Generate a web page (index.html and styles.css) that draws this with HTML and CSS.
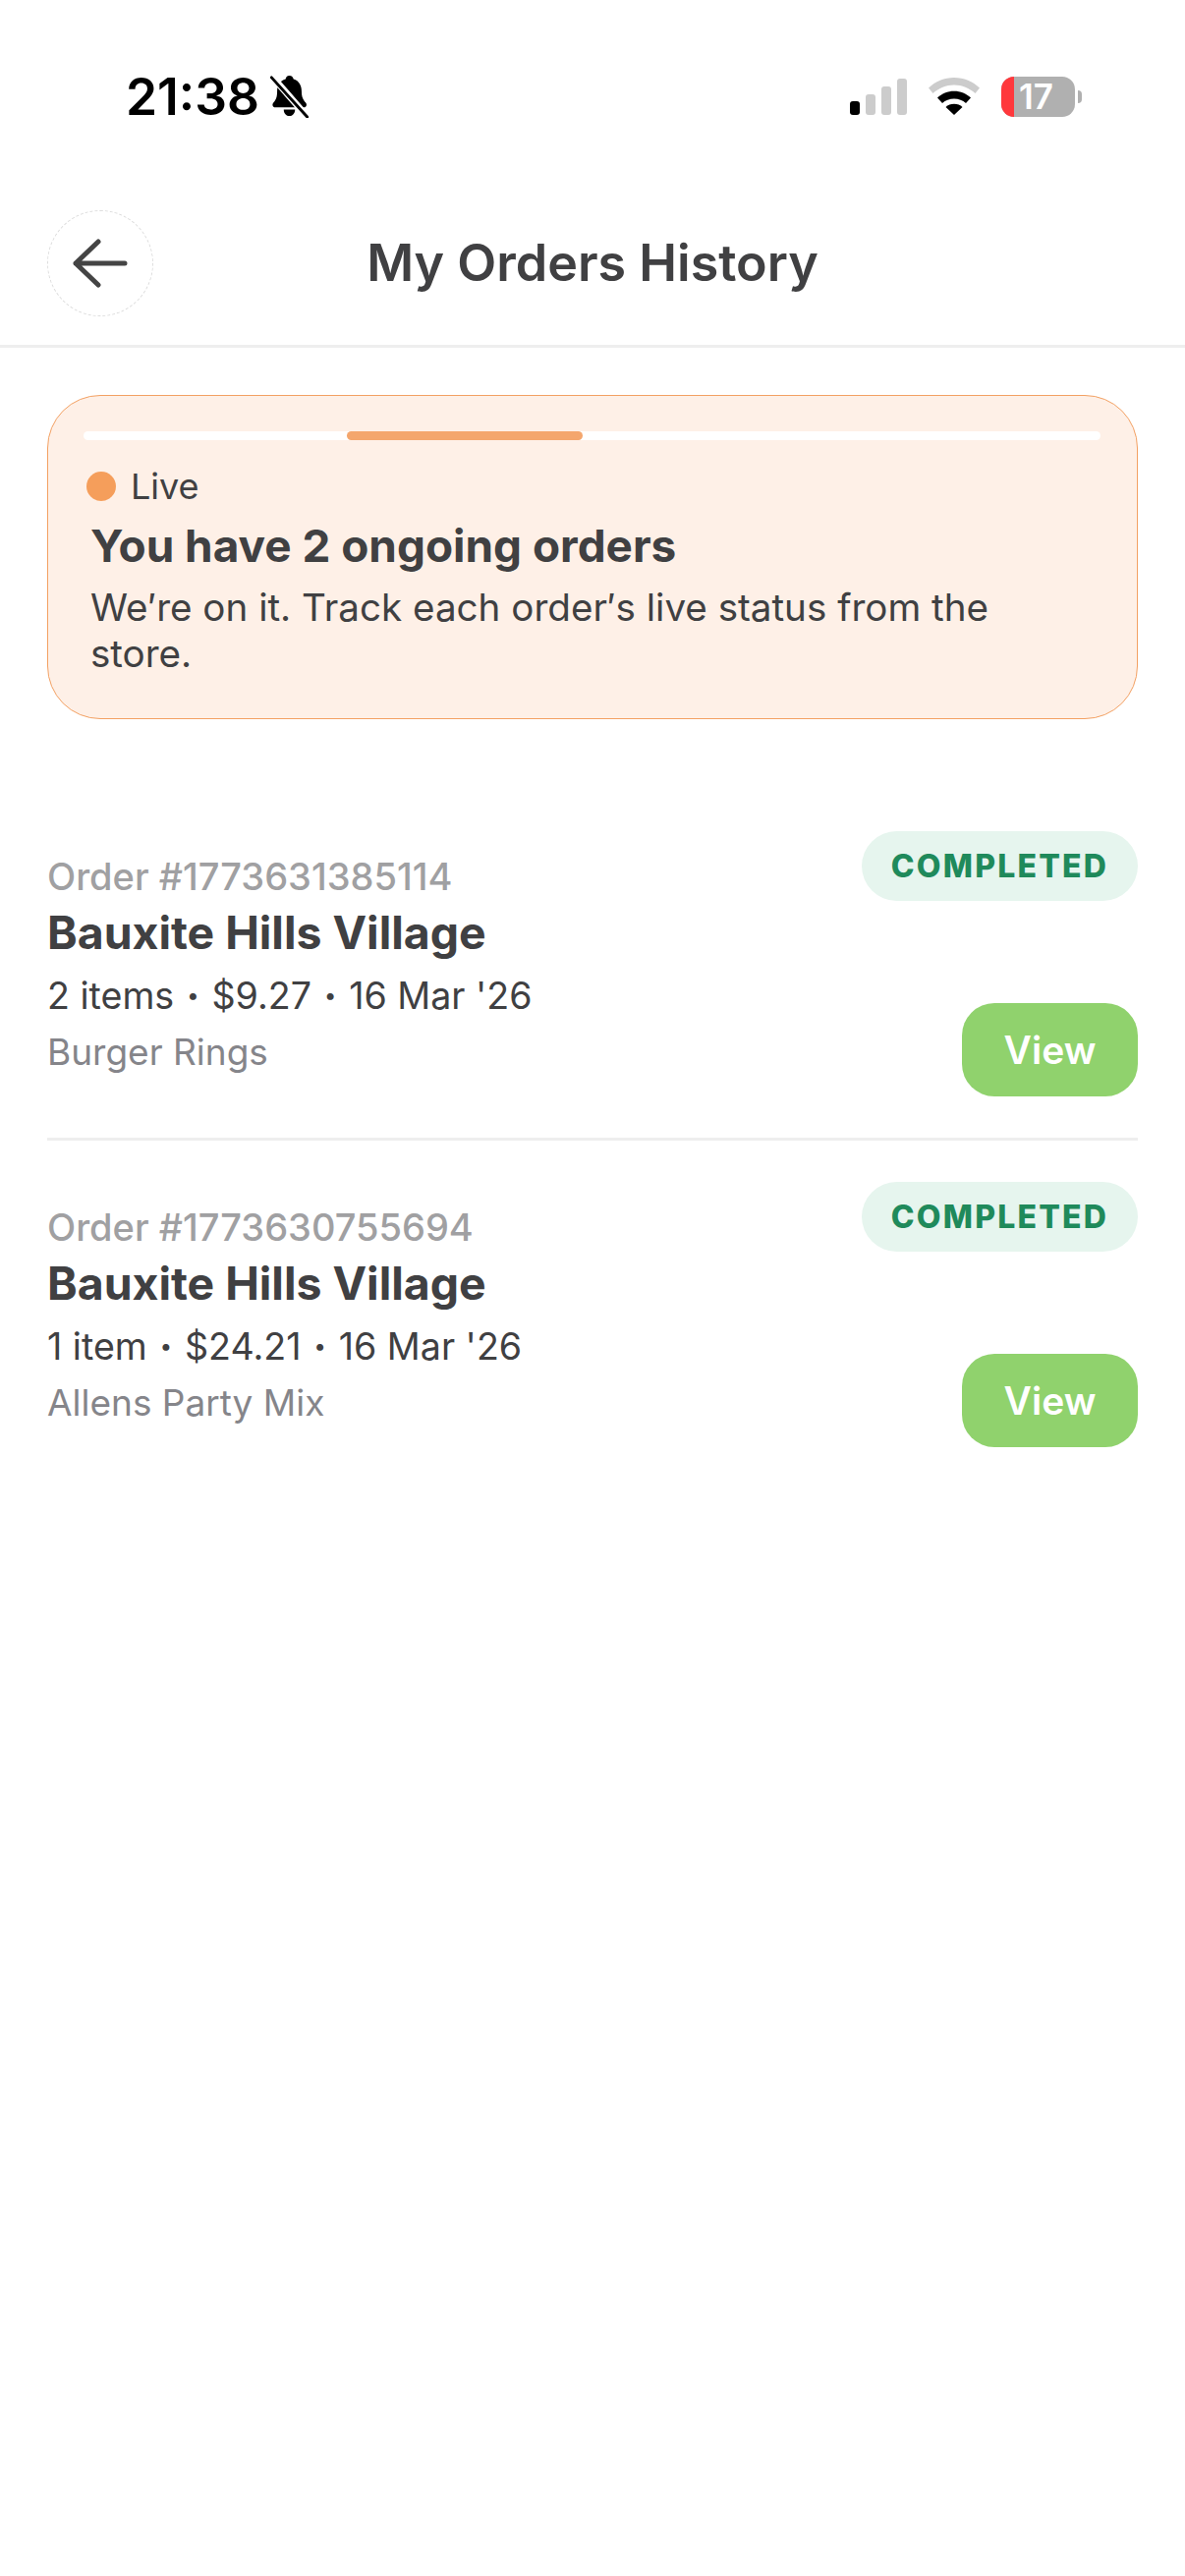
FILE: index.html
```html
<!DOCTYPE html>
<html lang="en">
<head>
<meta charset="utf-8">
<title>My Orders History</title>
<link rel="stylesheet" href="styles.css">
</head>
<body>
<div class="status">
  <div class="status-left">
    <span class="time">21:38</span>
    <svg class="bell" viewBox="0 0 40 46" width="39" height="44">
      <path fill="#000" d="M20 1c2.600 0 4 1.800 4.400 3.800 6 1.800 8.600 7 8.600 13 0 6 1.600 9 4.400 12 1.600 1.800 1 5-2 5H5c-3 0-3.600-3.200-2-5 2.800-3 4-6 4-12 0-6 3-11.200 9-13C16.400 2.800 17.400 1 20 1z"/>
      <path fill="#000" d="M14 37h12c0 4-2.600 7-6 7s-6-3-6-7z"/>
      <path stroke="#fff" stroke-width="7" d="M0 0 40 46"/>
      <path stroke="#000" stroke-width="3" stroke-linecap="round" d="M1 3 39 45"/>
    </svg>
  </div>
  <div class="status-right">
    <div class="signal">
      <i class="bar bar-1"></i><i class="bar bar-2"></i><i class="bar bar-3"></i><i class="bar bar-4"></i>
    </div>
    <svg class="wifi" viewBox="0 0 52 38" width="52" height="38">
      <path fill="#ccc" d="M0 10.500C7 4 16 0 26 0s19 4 26 10.500l-4.500 5.500C41.500 10.700 34 7.500 26 7.500S10.500 10.700 4.500 16z"/>
      <path fill="#000" d="M9 20.500C13.500 16.300 19.500 13.800 26 13.800s12.500 2.500 17 6.700l-5 5.500C34.800 23.200 30.600 21.500 26 21.500S17.200 23.200 14 26z"/>
      <path fill="#000" d="M17.500 30c2.200-2 5.200-3.200 8.500-3.200s6.300 1.200 8.500 3.200L26 38z"/>
    </svg>
    <div class="battery">
      <div class="battery-body"><span class="battery-red"></span><span class="battery-num">17</span></div>
      <span class="battery-nub"></span>
    </div>
  </div>
</div>

<header class="header">
  <div class="back">
    <svg viewBox="0 0 56 50" width="56" height="50">
      <path fill="none" stroke="#444" stroke-width="5" stroke-linecap="round" stroke-linejoin="round" d="M26 3 3 25l23 22M3 25h50"/>
    </svg>
  </div>
  <h1 class="title">My Orders History</h1>
</header>

<section class="live-card">
  <div class="track"><div class="track-fill"></div></div>
  <div class="live-row"><span class="live-dot"></span><span class="live-label">Live</span></div>
  <h2 class="live-title">You have 2 ongoing orders</h2>
  <p class="live-text">We′re on it. Track each order′s live status from the store.</p>
</section>

<main class="orders">
  <article class="order">
    <div class="order-info">
      <div class="order-id">Order #1773631385114</div>
      <div class="order-store">Bauxite Hills Village</div>
      <div class="order-meta">2 items<span class="dot">·</span>$9.27<span class="dot">·</span>16 Mar '26</div>
      <div class="order-items">Burger Rings</div>
    </div>
    <div class="order-side">
      <span class="badge">COMPLETED</span>
      <span class="view">View</span>
    </div>
  </article>
  <article class="order">
    <div class="order-info">
      <div class="order-id">Order #1773630755694</div>
      <div class="order-store">Bauxite Hills Village</div>
      <div class="order-meta">1 item<span class="dot">·</span>$24.21<span class="dot">·</span>16 Mar '26</div>
      <div class="order-items">Allens Party Mix</div>
    </div>
    <div class="order-side">
      <span class="badge">COMPLETED</span>
      <span class="view">View</span>
    </div>
  </article>
</main>
</body>
</html>
```
FILE: styles.css
```css
* { box-sizing: border-box; }
html, body { margin: 0; padding: 0; background: #fff; }
body { width: 1206px; height: 2622px; overflow: hidden; font-family: Inter, "Liberation Sans", sans-serif; color: #404042; }

.status { height: 196px; display: flex; align-items: center; justify-content: space-between; padding: 0 105px 0 128px; }
.status-left { display: flex; align-items: center; gap: 11px; }
.time { font-size: 51.500px; font-weight: 600; color: #000; line-height: 60px; }
.bell { display: block; }
.status-right { display: flex; align-items: center; }
.signal { display: flex; align-items: flex-end; gap: 6px; height: 37px; margin-right: 22px; }
.bar { display: block; width: 10px; background: #ccc; border-radius: 3px; }
.bar-1 { height: 14px; background: #000; }
.bar-2 { height: 21px; }
.bar-3 { height: 29px; }
.bar-4 { height: 37px; }
.wifi { display: block; margin-right: 22px; }
.battery { display: flex; align-items: center; }
.battery-body { position: relative; width: 75px; height: 41px; background: #b0b0b0; border-radius: 13px; overflow: hidden; display: flex; align-items: center; }
.battery-red { width: 13px; height: 100%; background: #ff383c; flex: none; }
.battery-num { color: #fff; font-size: 35px; font-weight: 600; line-height: 41px; margin-left: 5px; }
.battery-nub { width: 4px; height: 13px; background: #b0b0b0; border-radius: 0 6px 6px 0; margin-left: 3px; }

.header { position: relative; height: 158px; padding: 18px 48px 0; border-bottom: 3px solid #eee; }
.back { width: 108px; height: 108px; border-radius: 50%; border: 1px dashed #ddd; display: flex; align-items: center; justify-content: center; }
.back svg { display: block; }
.title { position: absolute; left: 0; right: 0; top: 41px; margin: 0; text-align: center; font-size: 52px; font-weight: 600; line-height: 62px; color: #404042; }

.live-card { margin: 48px 48px 0; height: 330px; padding: 36px 37px 0 36px; background: #fef0e7; border: 1px solid #f3a163; border-radius: 54px; }
.track { height: 9px; background: #fff; border-radius: 5px; position: relative; }
.track-fill { position: absolute; left: 268px; width: 240px; top: 0; bottom: 0; background: #f4a66d; border-radius: 5px; }
.live-row { display: flex; align-items: center; gap: 15px; margin: 24px 0 0 3px; height: 46px; }
.live-dot { width: 30px; height: 30px; border-radius: 50%; background: #f59e5b; }
.live-label { font-size: 36px; line-height: 46px; color: #404042; }
.live-title { margin: 8px 0 0 7px; font-size: 45.900px; font-weight: 700; line-height: 60px; color: #404042; }
.live-text { margin: 9px 40px 0 7px; font-size: 38.600px; font-weight: 400; line-height: 47px; color: #404042; }

.orders { margin: 71px 48px 0; }
.order { display: flex; justify-content: space-between; padding: 43px 0 42px; }
.order + .order { border-top: 3px solid #eee; padding-top: 42px; }
.order-info { padding-top: 20px; }
.order-id { font-size: 38px; font-weight: 500; line-height: 52px; color: #a0a0a2; }
.order-store { font-size: 46.400px; font-weight: 700; line-height: 62px; color: #404042; }
.order-meta { font-size: 37.600px; line-height: 68px; color: #404042; }
.dot { font-weight: 800; margin: 0 12.500px; }
.order-items { font-size: 37px; line-height: 46px; color: #85858a; }
.order-side { display: flex; flex-direction: column; align-items: flex-end; justify-content: space-between; height: 270px; }
.badge { width: 281px; height: 71px; border-radius: 36px; background: #e6f5ee; color: #1f8a5b; font-size: 32px; font-weight: 800; letter-spacing: 2.2px; display: flex; align-items: center; justify-content: center; }
.view { width: 179px; height: 95px; border-radius: 33px; background: #90d26d; color: #fff; font-size: 39px; font-weight: 600; display: flex; align-items: center; justify-content: center; }
```
